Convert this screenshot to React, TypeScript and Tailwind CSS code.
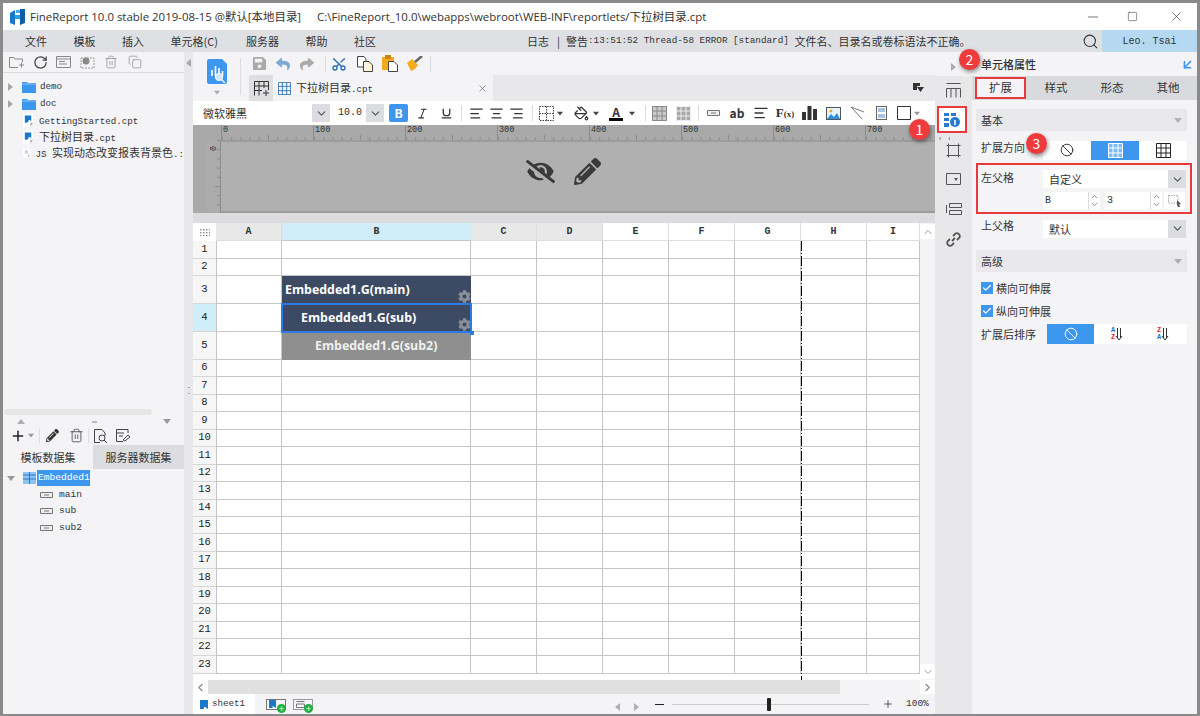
import React from 'react'
import { ChevronDown, ChevronUp, ChevronLeft, ChevronRight, Search, Minus, Square, X, RotateCw, Trash2, Copy, Plus, Scissors, Check, Ban, AlignLeft, AlignCenter, AlignRight, Italic, Underline, PaintBucket, ArrowDownLeft } from 'lucide-react'
import { FaEyeSlash, FaPencilAlt, FaCog, FaSave, FaReply, FaShare } from 'react-icons/fa'

const COLS = ['A', 'B', 'C', 'D', 'E', 'F', 'G', 'H', 'I']
const COL_W = [66, 189, 66, 66, 66, 66, 66, 66, 53]
const ROW_H = [18, 17, 28, 28, 28, ...Array(18).fill(17.44)]

const mono = "font-['Liberation_Mono','Noto_Sans_CJK_SC',monospace]"

function Logo() {
  return (
    <svg width="15" height="16" viewBox="0 0 15 16">
      <path d="M0 4 L5 1 V16 L0 14Z" fill="#1976c8" />
      <path d="M5 6 H10 V10 H5Z" fill="#2aa3e8" />
      <path d="M10 0 H15 V14 L10 16Z" fill="#0f5fa8" />
      <path d="M6 1 H10 V4 H6Z" fill="#39b3f0" />
    </svg>
  )
}

function Folder() {
  return (
    <svg width="14" height="12" viewBox="0 0 14 12">
      <path d="M0 1 H5 L6 2 H14 V12 H0Z" fill="#3e97ef" />
      <path d="M0 3 H14" stroke="#8cc4f7" />
    </svg>
  )
}

function FileIcon({ light }: { light?: boolean }) {
  return (
    <svg width="11" height="14" viewBox="0 0 12 14">
      <path d="M0 0 H11 V10 L8 14 H0Z" fill="#fff" />
      <path d="M11 10 L8 14 V10Z" fill="#aaa" />
      {light ? (
        <path d="M3 4 H8 M3 7 H8" stroke="#9ab" strokeWidth="1.5" />
      ) : (
        <path d="M2 2 H9 V8 L7 7 H6 V9 L4 10 H2Z" fill="#1a78c8" />
      )}
    </svg>
  )
}

function Latin({ children }: { children: React.ReactNode }) {
  return <span className={`text-[9.2px] ${mono}`}>{children}</span>
}

function FileRow({ light, children }: { light?: boolean; children: React.ReactNode }) {
  return (
    <div className="flex h-[16.5px] items-center overflow-hidden pl-[20px] text-[11px] leading-none text-[#333]">
      <FileIcon light={light} />
      <span className="ml-[5px] whitespace-nowrap">{children}</span>
    </div>
  )
}

function FolderRow({ label }: { label: string }) {
  return (
    <div className="flex h-[16.5px] items-center pl-[5px]">
      <Tri />
      <span className="ml-[9px]"><Folder /></span>
      <span className={`ml-[4px] text-[9.2px] ${mono}`}>{label}</span>
    </div>
  )
}

function Tri({ dir = 'right', cls = 'border-l-[#a8a8a8]' }: { dir?: string; cls?: string }) {
  if (dir === 'right') return <span className={`inline-block h-0 w-0 border-y-[4px] border-l-[5px] border-y-transparent ${cls}`} />
  if (dir === 'left') return <span className={`inline-block h-0 w-0 border-y-[4px] border-r-[5px] border-y-transparent ${cls}`} />
  return <span className={`inline-block h-0 w-0 border-x-[4px] border-t-[5px] border-x-transparent ${cls}`} />
}

function Badge({ n, cls }: { n: number; cls: string }) {
  return (
    <span className={`absolute z-20 flex h-[21px] w-[21px] items-center justify-center rounded-full bg-[#ee3c3c] text-[14px] text-white shadow-[1px_2px_4px_rgba(0,0,0,0.45)] ${cls}`}>
      {n}
    </span>
  )
}

function Sep() {
  return <span className="h-[16px] w-px shrink-0 bg-[#dcdcdc]" />
}

function Slot({ w = 24, children }: { w?: number; children?: React.ReactNode }) {
  return <span style={{ width: w }} className="flex shrink-0 items-center justify-center">{children}</span>
}

function GridIcon({ color = '#555', fill, size = 15 }: { color?: string; fill?: string; size?: number }) {
  return (
    <svg width={size} height={size} viewBox="0 0 15 15">
      {fill && <rect width="15" height="15" fill={fill} />}
      <path d="M.5 .5 H14.5 V14.5 H.5Z M.5 5 H14.5 M.5 10 H14.5 M5 .5 V14.5 M10 .5 V14.5" stroke={color} fill="none" />
    </svg>
  )
}

function Select({ w, children, chev = 18, cls = 'text-[11px]' }: { w: number; children: React.ReactNode; chev?: number; cls?: string }) {
  return (
    <div style={{ width: w }} className="flex h-[18px] shrink-0 items-stretch bg-white">
      <span className={`flex-1 overflow-hidden whitespace-nowrap pl-[6px] leading-[18px] text-[#333] ${cls}`}>{children}</span>
      <span style={{ width: chev }} className="flex items-center justify-center bg-[#dcdde0]">
        <ChevronDown size={13} className="text-[#555]" />
      </span>
    </div>
  )
}

function Spin({ v, w }: { v: string; w: number }) {
  return (
    <div className="flex h-[17px] shrink-0 items-stretch">
      <span style={{ width: w }} className={`bg-white pl-[2px] text-[10px] leading-[17px] text-[#333] ${mono}`}>{v}</span>
      <span className="flex w-[12px] flex-col items-center justify-center border-l border-[#ddd] bg-white">
        <ChevronUp size={9} className="-mb-[1px] text-[#666]" />
        <ChevronDown size={9} className="text-[#666]" />
      </span>
    </div>
  )
}

function SortIcon({ flip }: { flip?: boolean }) {
  return (
    <span className="flex items-center">
      <span className={`flex flex-col text-[7px] font-bold leading-[7px] ${mono}`}>
        <span className={flip ? 'text-[#e22]' : 'text-[#2a6fb0]'}>{flip ? 'Z' : 'A'}</span>
        <span className={flip ? 'text-[#2a6fb0]' : 'text-[#e22]'}>{flip ? 'A' : 'Z'}</span>
      </span>
      <svg width="8" height="13" viewBox="0 0 8 13"><path d="M2.5 0 V10 M5.5 0 V10 M1 8 L4 12 L7 8" stroke="#333" fill="none" /></svg>
    </span>
  )
}

function Section({ label }: { label: string }) {
  return (
    <div className="flex h-[22px] items-center justify-between bg-[#e9e9ec] px-[5px]">
      <span className="text-[11px] text-[#333]">{label}</span>
      <Tri dir="down" cls="border-t-[#b0b0b0]" />
    </div>
  )
}

function Ruler() {
  return (
    <div className="flex h-[15px] bg-[#a9a9a9]">
      <span className="w-[28px] shrink-0" />
      {[0, 100, 200, 300, 400, 500, 600, 700].map(n => (
        <span key={n} className="relative h-full w-[92px] shrink-0 border-l border-[#8c8c8c] pl-[1px]">
          <span className={`block text-[8.5px] leading-[10px] text-[#333] ${mono}`}>{n}</span>
          <svg className="absolute bottom-0 left-0" width="92" height="5">
            {[...Array(10).keys()].map(i => (
              <path key={i} d={`M${i * 9.2 + 0.5} ${i === 5 ? 0 : 2} V5`} stroke="#8c8c8c" />
            ))}
          </svg>
        </span>
      ))}
    </div>
  )
}

function ReportLogo() {
  return (
    <svg width="20" height="25" viewBox="0 0 20 25">
      <path d="M2 0 H15 L20 5 V23 Q20 25 18 25 H2 Q0 25 0 23 V2 Q0 0 2 0Z" fill="#3e97ef" />
      <path d="M5 17 V11 M8.5 17 V7 M12 17 V9 M15.5 17 V12" stroke="#fff" strokeWidth="1.6" />
      <circle cx="12" cy="18" r="3.6" fill="#cfe6fb" stroke="#fff" strokeWidth="1" />
      <path d="M14.6 20.6 L18 24" stroke="#dfeffd" strokeWidth="1.6" />
    </svg>
  )
}

function CopyIcon() {
  return (
    <svg width="16" height="16" viewBox="0 0 16 16">
      <path d="M.5 .5 H7 L9 3 V11 H.5Z" fill="#fff" stroke="#444" />
      <path d="M6.5 5.5 H12 L15.5 9 V15.5 H6.5Z" fill="#fdf5d8" stroke="#444" />
    </svg>
  )
}

function PasteIcon() {
  return (
    <svg width="16" height="17" viewBox="0 0 16 17">
      <rect x="0" y="2" width="12" height="13" fill="#f5ab1d" />
      <rect x="3" y="0" width="6" height="4" fill="#c98510" />
      <path d="M6.5 6.5 H12 L15.5 10 V16.5 H6.5Z" fill="#fff" stroke="#444" />
    </svg>
  )
}

function BrushIcon() {
  return (
    <svg width="16" height="15" viewBox="0 0 16 15">
      <path d="M0 7 L5 3 L11 9 Q8 14 4 15 Q2 11 0 7Z" fill="#f5ab1d" />
      <path d="M8 6 L15 0" stroke="#666" strokeWidth="2.6" />
    </svg>
  )
}

function Bars() {
  return (
    <svg width="15" height="14" viewBox="0 0 15 14">
      <path d="M0 6 H4 V14 H0Z M5.5 0 H9.5 V14 H5.5Z M11 3 H15 V14 H11Z" fill="#333" />
    </svg>
  )
}

function Sheet() {
  return (
    <div className="relative h-[439px] overflow-hidden bg-white">
      {ROW_H.map((h, r) => (
        <div key={r} style={{ height: h }} className="flex">
          <span className={`flex w-[23px] shrink-0 items-center justify-center border-b border-[#d6d6d6] text-[10.5px] text-[#222] ${mono} ${r === 3 ? 'bg-[#cfeefa]' : 'bg-[#f6f6f6]'}`}>
            {r + 1}
          </span>
          {COL_W.map((w, c) => (
            <span key={c} style={{ width: w }} className={`shrink-0 border-r border-b border-[#c6c6c6] ${c === 0 ? 'border-l' : ''}`} />
          ))}
        </div>
      ))}

      {/* expanded cells sit over the grid */}
      <div className="absolute left-[89px] top-[35px] z-10 flex h-[84px] w-[189px] flex-col text-[12.4px] font-bold text-white font-['Open_Sans',sans-serif]">
        <div className="relative flex h-[28px] items-center bg-[#3d4a63] pl-[3px]">
          Embedded1.G(main)
          <FaCog size={13} className="absolute bottom-[1px] right-[0px] text-[#8a8f99]" />
        </div>
        <div className="relative flex h-[28px] items-center bg-[#3d4a63] pl-[19px]">
          Embedded1.G(sub)
          <FaCog size={13} className="absolute bottom-[1px] right-[0px] text-[#8a8f99]" />
        </div>
        <div className="flex h-[28px] items-center bg-[#8f8f8f] pl-[33px] text-[#f0f0f0]">Embedded1.G(sub2)</div>
      </div>
      <div className="absolute left-[88px] top-[62px] z-10 h-[30px] w-[191px] border-2 border-[#2c7be5]" />
      <div className="absolute left-[277px] top-[90px] z-10 h-[4px] w-[4px] bg-[#2c7be5]" />
      <div className="absolute left-[608px] top-0 z-10 h-full w-px bg-[repeating-linear-gradient(to_bottom,#000_0,#000_10px,transparent_10px,transparent_12px,#000_12px,#000_13px,transparent_13px,transparent_15px)]" />
    </div>
  )
}

export default function App() {
  return (
    <div className="flex h-[716px] w-[1200px] flex-col overflow-hidden border-x-[3px] border-t-[3px] border-b-[2px] border-[#8a8a8a] bg-white font-['Noto_Sans_CJK_SC','Noto_Sans',sans-serif] text-[#333]">
      {/* title bar */}
      <div className="flex h-[27px] shrink-0 items-center bg-white pl-[7px] text-[11.45px] font-['Open_Sans','Noto_Sans_CJK_SC',sans-serif]">
        <Logo />
        <span className="ml-[5px] whitespace-nowrap">FineReport 10.0 stable 2019-08-15 @默认[本地目录]</span>
        <span className="ml-[16px] whitespace-nowrap">C:\FineReport_10.0\webapps\webroot\WEB-INF\reportlets/下拉树目录.cpt</span>
        <span className="ml-auto flex items-center">
          <Minus size={16} strokeWidth={1} className="mr-[26px]" />
          <Square size={11} strokeWidth={1.2} className="mr-[31px]" />
          <X size={15} strokeWidth={1} className="mr-[13px]" />
        </span>
      </div>

      {/* menu bar */}
      <div className="flex h-[22px] shrink-0 items-center bg-[#dfe0e3] pl-[22px] text-[11px]">
        <div className="flex gap-[26.5px]">
          {['文件', '模板', '插入', '单元格(C)', '服务器', '帮助', '社区'].map(m => (
            <span key={m} className={`whitespace-nowrap ${m.length > 3 ? 'w-[49px]' : ''}`}>{m}</span>
          ))}
        </div>
        <span className="ml-[151px] flex items-center whitespace-nowrap">
          <span>日志</span>
          <span className="ml-[8px]">|</span>
          <span className="ml-[6px]">警告</span>
          <span className={`whitespace-pre text-[9.3px] ${mono}`}>:13:51:52 Thread-58 ERROR [standard] </span>
          <span>文件名、目录名或卷标语法不正确。</span>
        </span>
        <Search size={17} strokeWidth={1.5} className="ml-auto mr-[3px]" />
        <span className={`flex h-full w-[95px] items-center justify-center bg-[#b5d9f1] text-[10px] ${mono}`}>Leo. Tsai</span>
      </div>

      <div className="flex min-h-0 flex-1">
        {/* left pane */}
        <aside className="flex w-[181px] shrink-0 flex-col bg-[#f4f4f7]">
          <div className="flex h-[21px] items-center border-b border-[#dcdcdc] pl-[2px] text-[#8a8a8a]">
            <Slot w={23.6}><svg width="15" height="12" viewBox="0 0 15 12"><path d="M.5 1.5 H5 L6 3 H13.5 V6 M9 11.5 H.5 V1.5 M10 9 H15 M12.5 6.5 V11.5" stroke="#888" fill="none" /></svg></Slot>
            <Slot w={23.6}><RotateCw size={15} strokeWidth={2} className="text-[#444]" /></Slot>
            <Slot w={23.6}><svg width="15" height="12" viewBox="0 0 15 12"><path d="M.5 .5 H14.5 V11.5 H.5Z M.5 3 H14.5 M3 5.5 H9 M3 8 H11" stroke="#888" fill="none" /></svg></Slot>
            <Slot w={23.6}><svg width="15" height="14" viewBox="0 0 15 14"><path d="M1 3 H14 V13 H1Z" stroke="#999" fill="none" strokeDasharray="2 1" /><circle cx="6" cy="6" r="3.5" fill="#888" /></svg></Slot>
            <Slot w={23.6}><Trash2 size={14} strokeWidth={1.2} /></Slot>
            <Slot w={23.6}><Copy size={14} strokeWidth={1.2} /></Slot>
          </div>
          <div className="h-[336px] pt-[6px]">
            <FolderRow label="demo" />
            <FolderRow label="doc" />
            <FileRow><Latin>GettingStarted.cpt</Latin></FileRow>
            <FileRow>下拉树目录<Latin>.cpt</Latin></FileRow>
            <FileRow light><Latin>JS </Latin>实现动态改变报表背景色<Latin>.:</Latin></FileRow>
          </div>
          <div className="ml-[1px] h-[6px] w-[148px] rounded-full bg-[#e6e6e6]" />
          <div className="flex h-[11px] items-center justify-between pl-[14px] pr-[13px] pt-[2px]">
            <Tri dir="down" cls="rotate-180 border-t-[#b0b0b0]" />
            <span className="h-[2px] w-[5px] bg-[#bbb]" />
            <Tri dir="down" cls="border-t-[#999]" />
          </div>
          <div className="flex h-[19px] items-center pl-[7px]">
            <Plus size={16} strokeWidth={2.2} className="text-[#222]" />
            <Tri dir="down" cls="ml-[1px] border-t-[#999] scale-75" />
            <span className="ml-[4px] h-[14px] w-px bg-[#ddd]" />
            <Slot w={24}><FaPencilAlt size={13} className="text-[#333]" /></Slot>
            <Slot w={24}><Trash2 size={15} strokeWidth={1.3} className="text-[#444]" /></Slot>
            <span className="h-[14px] w-px bg-[#ddd]" />
            <Slot w={22}><svg width="13" height="14" viewBox="0 0 13 14"><path d="M.5 .5 H8 L11 4 V7 M6 13.5 H.5 V.5" stroke="#444" fill="none" /><circle cx="8" cy="9" r="3" stroke="#444" fill="none" /><path d="M10 11 L13 14" stroke="#444" /></svg></Slot>
            <Slot w={24}><svg width="14" height="13" viewBox="0 0 14 13"><path d="M.5 .5 H12 V4 M7 12.5 H.5 V.5 M.5 4 H8 M3 7 H7" stroke="#444" fill="none" /><path d="M7 11 L12 6 L14 8 L9 12Z" stroke="#444" fill="none" /></svg></Slot>
          </div>
          <div className="flex h-[24px] text-[11px]">
            <span className="flex w-[90px] items-center justify-center">模板数据集</span>
            <span className="flex w-[91px] items-center justify-center bg-[#dcdde0]">服务器数据集</span>
          </div>
          <div className="pt-[1px]">
            <div className="flex h-[16.5px] items-center pl-[4px]">
              <Tri dir="down" cls="border-t-[#999]" />
              <svg className="ml-[8px]" width="13" height="12" viewBox="0 0 13 12"><path d="M0 0 H13 V12 H0Z" fill="#8cc4f7" /><path d="M0 3 H13 M0 7 H13 M6.5 0 V12" stroke="#2a7ad0" /></svg>
              <span className={`ml-[1px] flex h-[16px] w-[53px] items-center bg-[#3e97ef] pl-[1px] text-[9.6px] text-white ${mono}`}>Embedded1</span>
            </div>
            {['main', 'sub', 'sub2'].map(t => (
              <div key={t} className="flex h-[16.5px] items-center pl-[37px]">
                <svg width="13" height="6" viewBox="0 0 13 6"><path d="M.5 .5 H12.5 V5.5 H.5Z M4 3 H9" stroke="#777" fill="#eee" /></svg>
                <span className={`ml-[6px] text-[9.6px] ${mono}`}>{t}</span>
              </div>
            ))}
          </div>
        </aside>

        {/* gutter */}
        <div className="flex w-[9px] shrink-0 flex-col items-center bg-[#e8e8ea] pt-[7px]">
          <Tri dir="left" cls="border-r-[#a8a8a8]" />
          <span className="mt-[320px] h-[7px] w-[2px] border-y border-[#aaa]" />
        </div>

        {/* centre */}
        <main className="flex w-[742px] shrink-0 flex-col">
          <div className="flex h-[49px] shrink-0 bg-[#f4f4f7]">
            <div className="flex w-[47px] shrink-0 flex-col items-center pt-[7px]">
              <ReportLogo />
              <Tri dir="down" cls="mt-[6px] border-t-[#aaa] scale-75" />
            </div>
            <span className="my-[6px] w-px bg-[#dcdcdc]" />
            <div className="ml-[8px] flex flex-1 flex-col">
              <div className="-ml-[2px] flex h-[23px] items-center">
                <Slot><FaSave size={15} className="text-[#a9a9a9]" /></Slot>
                <Slot><FaReply size={14} className="text-[#7fa9d3]" /></Slot>
                <Slot><FaShare size={14} className="text-[#a9a9a9]" /></Slot>
                <span className="w-[6px]" />
                <Sep />
                <Slot w={26}><Scissors size={16} className="-rotate-90 text-[#2a6fb0]" /></Slot>
                <Slot w={25}><CopyIcon /></Slot>
                <Slot w={25}><PasteIcon /></Slot>
                <Slot w={25}><BrushIcon /></Slot>
                <span className="w-[3px]" />
                <Sep />
              </div>
              <div className="flex h-[26px] items-stretch bg-[#e8e8ea]">
                <span className="flex w-[24px] items-center justify-center bg-[#dfdfe1]">
                  <svg width="15" height="15" viewBox="0 0 15 15"><path d="M.5 .5 H14.5 V9 M.5 .5 V14.5 M.5 5 H14.5 M.5 9.5 H8 M5 .5 V14.5 M10 .5 V7 M12 9 V15 M9 12 H15" stroke="#333" fill="none" /></svg>
                </span>
                <span className="flex w-[220px] items-center bg-[#f4f4f7] pl-[5px] text-[11px]">
                  <GridIcon color="#2a6fb0" size={13} />
                  <span className="ml-[5px]">下拉树目录<Latin>.cpt</Latin></span>
                  <X size={11} strokeWidth={1.3} className="ml-auto mr-[5px] text-[#555]" />
                </span>
                <span className="ml-auto mr-[11px] flex items-center"><svg width="11" height="10" viewBox="0 0 11 10"><path d="M0 0 H7 V3 H4 V7 H0Z M4 4 H11 L7.5 9Z" fill="#333" /></svg></span>
              </div>
            </div>
          </div>

          {/* format toolbar */}
          <div className="relative flex h-[24px] shrink-0 items-center bg-white pl-[4px]">
            <Select w={133}>微软雅黑</Select>
            <span className="w-[5px]" />
            <Select w={49} chev={18} cls={`!pl-[3px] text-[10px] ${mono}`}>10.0</Select>
            <span className="ml-[5px] flex h-[18px] w-[19px] items-center justify-center rounded-[2px] bg-[#3e97ef] text-[12px] font-bold text-white">B</span>
            <span className="w-[2px]" />
            <Slot><Italic size={13} /></Slot>
            <Slot><Underline size={13} strokeWidth={2.4} /></Slot>
            <span className="w-[3px]" /><Sep /><span className="w-[4px]" />
            <Slot w={20}><AlignLeft size={15} /></Slot>
            <Slot w={20}><AlignCenter size={15} /></Slot>
            <Slot w={20}><AlignRight size={15} /></Slot>
            <span className="w-[6px]" /><Sep /><span className="w-[4px]" />
            <Slot w={18}><svg width="15" height="15" viewBox="0 0 15 15"><path d="M.5 .5 H14.5 V14.5 H.5Z M.5 7.5 H14.5 M7.5 .5 V14.5" stroke="#444" strokeDasharray="1.5 1" fill="none" /></svg></Slot>
            <Slot w={10}><Tri dir="down" cls="border-t-[#444] scale-75" /></Slot>
            <span className="w-[7px]" />
            <Slot w={18}><PaintBucket size={15} /></Slot>
            <Slot w={12}><Tri dir="down" cls="border-t-[#444] scale-75" /></Slot>
            <span className="w-[4px]" />
            <Slot w={20}><span className="flex flex-col items-center text-[12px] font-bold leading-[12px]">A<span className="h-[3px] w-[14px] bg-black" /></span></Slot>
            <Slot w={12}><Tri dir="down" cls="border-t-[#444] scale-75" /></Slot>
            <span className="w-[7px]" /><Sep /><span className="w-[1px]" />
            <Slot><GridIcon color="#888" fill="#c9c9c9" /></Slot>
            <Slot><GridIcon color="#eee" fill="#a8a8a8" /></Slot>
            <span className="w-[3px]" /><Sep /><span className="w-[2px]" />
            <Slot><svg width="13" height="6" viewBox="0 0 13 6"><path d="M.5 .5 H12.5 V5.5 H.5Z M4 3 H9" stroke="#777" fill="#eee" /></svg></Slot>
            <Slot><span className="text-[12px] font-semibold">ab</span></Slot>
            <Slot><AlignLeft size={16} strokeWidth={2} /></Slot>
            <Slot><span className="font-['Liberation_Serif',serif] text-[13px] font-semibold">F<span className="text-[9px]">(x)</span></span></Slot>
            <Slot><Bars /></Slot>
            <Slot><svg width="15" height="13" viewBox="0 0 15 13"><rect x=".5" y=".5" width="14" height="12" fill="#e6f3fb" stroke="#555" /><path d="M1 12 L5 7 L8 10 L11 6 L14 12Z" fill="#2a8fe0" /><circle cx="5" cy="4" r="1.5" fill="#f0a820" /></svg></Slot>
            <Slot><svg width="15" height="14" viewBox="0 0 15 14"><path d="M1 1 L14 6 M1 1 L12 13" stroke="#777" fill="none" /></svg></Slot>
            <Slot><svg width="11" height="14" viewBox="0 0 11 14"><rect x=".5" y=".5" width="10" height="13" fill="#fff" stroke="#666" /><path d="M2 3 H9 M2 5 H9 M2 9 H9 M2 11 H9" stroke="#4a8ac8" /></svg></Slot>
            <Slot w={22}><svg width="14" height="14" viewBox="0 0 14 14"><path d="M.5 .5 H13.5 V13.5 H.5Z" stroke="#333" fill="none" /></svg></Slot>
            <Slot w={4}><Tri dir="down" cls="border-t-[#999] scale-75" /></Slot>
            <Badge n={1} cls="left-[716px] top-[18px]" />
          </div>

          {/* form area */}
          <Ruler />
          <div className="flex h-[73px] shrink-0 bg-[#b0b0b0]">
            <div className="flex w-[28px] shrink-0 justify-end bg-[#a9a9a9]">
              <div className="relative h-full w-[15px] border-r border-[#8c8c8c] bg-[#ababab]">
                <span className={`ml-[2px] block -rotate-90 text-[8.5px] leading-[10px] ${mono}`}>0</span>
                <svg className="absolute right-0 top-0" width="5" height="73">
                  {[...Array(8).keys()].map(i => (
                    <path key={i} d={`M${i === 5 ? 0 : 2} ${i * 9.2 + 0.5} H5`} stroke="#8c8c8c" />
                  ))}
                </svg>
              </div>
            </div>
            <div className="flex flex-1 items-center gap-[19px] border-t-2 border-b-2 border-[#9c9c9c] pb-[10px] pl-[305px] text-[#3a3a3a]">
              <FaEyeSlash size={29} />
              <FaPencilAlt size={27} />
            </div>
          </div>
          <div className="h-[10px] shrink-0 bg-[#dcdcdf]" />

          {/* sheet */}
          <div className="flex min-h-0 flex-1 flex-col bg-[#f4f4f7]">
            <div className="flex min-h-0 flex-1">
              <div className="w-[727px] shrink-0">
                <div className={`flex h-[18px] items-stretch text-[10px] font-semibold ${mono}`}>
                  <span className="flex w-[23px] items-center justify-center bg-white">
                    <svg width="10" height="7" viewBox="0 0 10 7">
                      {[0, 3, 6].map(y => [0, 3, 6, 9].map(x => <rect key={`${x}${y}`} x={x} y={y} width="1.4" height="1.4" fill="#888" />))}
                    </svg>
                  </span>
                  {COLS.map((c, i) => (
                    <span key={c} style={{ width: COL_W[i] }} className={`flex shrink-0 items-center justify-center border-b border-[#c6c6c6] ${i === 1 ? 'bg-[#cfeefa]' : i === 0 || i === 2 || i === 3 ? 'border-r border-[#dedede] bg-[#e8e8e8]' : 'border-r border-[#dedede] bg-white'}`}>
                      {c}
                    </span>
                  ))}
                </div>
                <Sheet />
              </div>
              <div className="flex w-[15px] shrink-0 flex-col items-center justify-between bg-[#f4f4f7] py-[1px]">
                <span className="flex h-[15px] w-full items-center justify-center bg-white"><ChevronUp size={12} className="text-[#999]" /></span>
                <span className="flex h-[15px] w-full items-center justify-center bg-white"><ChevronDown size={12} className="text-[#999]" /></span>
              </div>
            </div>
            <div className="flex h-[14px] shrink-0 items-stretch">
              <span className="flex w-[15px] items-center justify-center bg-white"><ChevronLeft size={13} className="text-[#888]" /></span>
              <span className="w-[632px] bg-[#e0e0e0]" />
              <span className="ml-auto flex w-[15px] items-center justify-center bg-white"><ChevronRight size={13} className="text-[#888]" /></span>
            </div>
            <div className="flex h-[20px] shrink-0 items-center">
              <span className={`flex h-full w-[62px] items-center bg-white pl-[7px] text-[9.2px] ${mono}`}>
                <svg width="8" height="9" viewBox="0 0 8 9"><path d="M0 0 H8 V9 L5 7 H4 V9 H0Z" fill="#1a78c8" /></svg>
                <span className="ml-[4px]">sheet1</span>
              </span>
              <span className="relative ml-[11px] flex h-[11px] w-[20px] items-center border border-[#777] pl-[2px]">
                <svg width="7" height="8" viewBox="0 0 8 9"><path d="M0 0 H8 V9 L5 7 H4 V9 H0Z" fill="#1a78c8" /></svg>
                <span className="absolute -bottom-[4px] -right-[1px] flex h-[9px] w-[9px] items-center justify-center rounded-full bg-[#1fb141] text-[9px] leading-none text-white">+</span>
              </span>
              <span className="relative ml-[7px] flex h-[11px] w-[20px] items-center border border-[#999] pl-[2px]">
                <svg width="9" height="7" viewBox="0 0 9 7"><path d="M.5 .5 H8.5 M.5 3 H8.5 V6.5 H.5Z" stroke="#777" fill="none" /></svg>
                <span className="absolute -bottom-[4px] -right-[1px] flex h-[9px] w-[9px] items-center justify-center rounded-full bg-[#1fb141] text-[9px] leading-none text-white">+</span>
              </span>
              <span className="ml-[302px]"><Tri dir="left" cls="border-r-[#b0b0b0]" /></span>
              <span className="ml-[14px]"><Tri cls="border-l-[#b0b0b0]" /></span>
              <span className="ml-[16px] h-px w-[9px] bg-[#222]" />
              <div className="relative ml-[8px] h-px w-[197px] bg-[#ccc]">
                <span className="absolute left-[95px] top-[-6px] h-[13px] w-[4px] rounded-[1px] bg-[#222]" />
              </div>
              <Plus size={12} strokeWidth={1.4} className="ml-[13px] text-[#222]" />
              <span className={`ml-[12px] text-[9.5px] ${mono}`}>100%</span>
            </div>
          </div>
        </main>

        {/* property strip + panel */}
        <div className="flex w-[262px] shrink-0 flex-col bg-[#f4f4f7]">
          <div className="relative flex h-[24px] shrink-0 items-center">
            <span className="ml-[16px]"><Tri cls="border-l-[#aaa]" /></span>
            <Badge n={2} cls="left-[24px] top-[-3px]" />
            <span className="ml-[25px] text-[11px] font-medium">单元格属性</span>
            <ArrowDownLeft size={15} strokeWidth={2.4} className="ml-auto mr-[2px] text-[#3e97ef]" />
          </div>
          <div className="flex min-h-0 flex-1">
            <div className="flex w-[37px] shrink-0 flex-col items-center bg-[#e8e8ea] pt-[7px] text-[#555]">
              <svg width="15" height="15" viewBox="0 0 15 15"><path d="M.5 .5 H14.5 M.5 5.5 H14.5 V14.5 M.5 5.5 V14.5 M5 5.5 V14.5 M10 5.5 V14.5" stroke="#555" fill="none" /></svg>
              <span className="mr-[3px] mt-[8px] flex h-[27px] w-[30px] items-center justify-center border-2 border-[#e83a3a] bg-white">
                <svg width="16" height="14" viewBox="0 0 16 14"><path d="M0 0 H5 V3 H0Z M7 0 H12 V3 H7Z M0 5 H5 V8 H0Z M0 10 H5 V14 H0Z" fill="#2a7ad0" /><circle cx="11" cy="9" r="5" fill="#2a7ad0" /><path d="M11 7 V12" stroke="#fff" strokeWidth="1.6" /></svg>
              </span>
              <svg className="mt-[10px]" width="15" height="15" viewBox="0 0 15 15"><path d="M2.5 .5 V14.5 M12.5 .5 V14.5 M.5 2.5 H14.5 M.5 12.5 H14.5" stroke="#555" fill="none" /></svg>
              <svg className="mt-[15px]" width="15" height="12" viewBox="0 0 15 12"><path d="M.5 .5 H14.5 V11.5 H.5Z" stroke="#555" fill="none" /><path d="M8 5 H12 L10 8Z" fill="#555" /></svg>
              <svg className="mt-[18px]" width="16" height="12" viewBox="0 0 16 12"><path d="M3.5 .5 H15.5 V4.5 H3.5Z M3.5 7.5 H15.5 V11.5 H3.5Z M.5 2 V10" stroke="#555" fill="none" /></svg>
              <svg className="mt-[17px]" width="15" height="15" viewBox="0 0 15 15"><path d="M6 9 L9 6 M4 7 L1.5 9.5 A3 3 0 0 0 5.5 13.5 L8 11 M7 4 L9.5 1.5 A3 3 0 0 1 13.5 5.5 L11 8" stroke="#555" strokeWidth="1.8" fill="none" /></svg>
            </div>

            <div className="relative flex-1 px-[4px] pr-[11px]">
              <div className="-ml-[4px] -mr-[11px] flex h-[24px] items-start bg-[#d9dadd] pl-[3px] text-[11.5px]">
                <span className="mt-[1px] flex h-[22px] w-[51px] items-center justify-center border-2 border-[#e83a3a] bg-[#f4f4f7]">扩展</span>
                <span className="flex h-full w-[60px] items-center justify-center">样式</span>
                <span className="flex h-full w-[52px] items-center justify-center">形态</span>
                <span className="flex h-full w-[60px] items-center justify-center">其他</span>
              </div>
              <div className="mt-[9px]"><Section label="基本" /></div>

              <div className="mt-[9px] flex h-[20px] items-center text-[11px]">
                <span className="-mt-[6px] w-[67px] pl-[5px]">扩展方向</span>
                <div className="flex h-[19px] flex-1 items-stretch bg-white">
                  <span className="flex flex-1 items-center justify-center"><Ban size={14} strokeWidth={1.6} /></span>
                  <span className="flex flex-1 items-center justify-center bg-[#3e97ef]"><GridIcon color="#fff" fill="#7bbcf7" /></span>
                  <span className="flex flex-1 items-center justify-center"><GridIcon color="#222" /></span>
                </div>
              </div>
              <Badge n={3} cls="left-[54px] top-[57px]" />

              <div className="-mr-[5px] mt-[3px] h-[51px] border-2 border-[#e83a3a] pl-[65px] pr-[3px] pt-[5px]">
                <span className="absolute left-[9px] -mt-[1px] text-[11px]">左父格</span>
                <Select w={143} chev={18}>自定义</Select>
                <div className="mt-[4px] flex items-center">
                  <Spin v="B" w={45} />
                  <span className="w-[5px]" />
                  <Spin v="3" w={45} />
                  <span className="ml-[2px] flex h-[17px] w-[21px] items-center justify-center bg-white">
                    <svg width="14" height="12" viewBox="0 0 14 12"><path d="M.5 .5 H10 V8 H.5Z" stroke="#aaa" strokeDasharray="1.5 1" fill="none" /><path d="M9 5 L13 9 L11 9.5 L12 12 L10 12 L9 10Z" fill="#555" /></svg>
                  </span>
                </div>
              </div>

              <div className="mt-[5px] flex h-[19px] items-center text-[11px]">
                <span className="-mt-[6px] w-[67px] pl-[5px]">上父格</span>
                <Select w={143} chev={18}>默认</Select>
              </div>

              <div className="mt-[12px]"><Section label="高级" /></div>

              <div className="mt-[9px] flex flex-col gap-[9px] pl-[5px] text-[11px]">
                {['横向可伸展', '纵向可伸展'].map(l => (
                  <label key={l} className="flex h-[14px] items-center">
                    <span className="flex h-[12px] w-[12px] items-center justify-center bg-[#3e97ef]"><Check size={10} strokeWidth={3} className="text-white" /></span>
                    <span className="ml-[3px]">{l}</span>
                  </label>
                ))}
              </div>

              <div className="mt-[6px] flex h-[20px] items-center text-[11px]">
                <span className="w-[71px] pl-[5px]">扩展后排序</span>
                <div className="flex h-[20px] flex-1 items-stretch bg-white">
                  <span className="flex w-[47px] items-center justify-center bg-[#3e97ef]"><Ban size={14} strokeWidth={1.6} className="text-white" /></span>
                  <span className="flex w-[46px] items-center justify-center"><SortIcon /></span>
                  <span className="flex w-[46px] items-center justify-center"><SortIcon flip /></span>
                </div>
              </div>
            </div>
          </div>
        </div>
      </div>
    </div>
  )
}
